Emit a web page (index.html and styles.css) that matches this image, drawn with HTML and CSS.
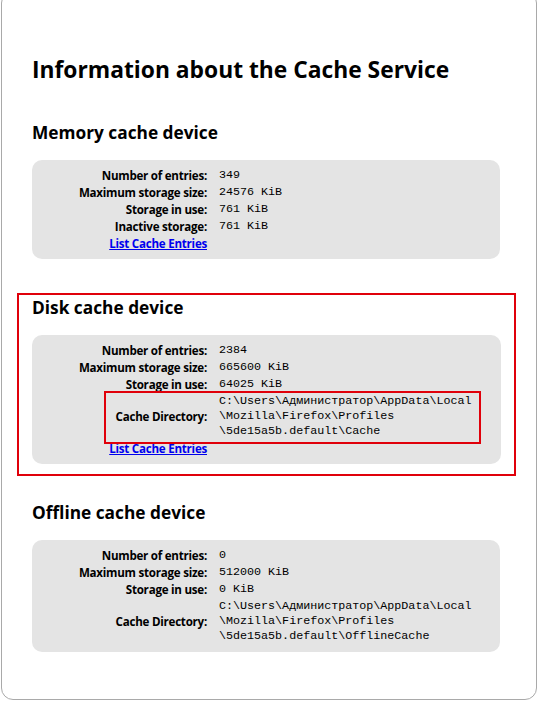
FILE: index.html
```html
<!DOCTYPE html>
<html>
<head>
<meta charset="utf-8">
<link rel="stylesheet" href="styles.css">
</head>
<body>
<div class="page">
  <h1 class="title">Information about the Cache Service</h1>

  <section class="device">
    <h2 class="dev-title">Memory cache device</h2>
    <div class="panel">
      <table class="info">
        <tr><th>Number of entries:</th><td>349</td></tr>
        <tr><th>Maximum storage size:</th><td>24576 KiB</td></tr>
        <tr><th>Storage in use:</th><td>761 KiB</td></tr>
        <tr><th>Inactive storage:</th><td>761 KiB</td></tr>
        <tr><th><a href="#">List Cache Entries</a></th><td></td></tr>
      </table>
    </div>
  </section>

  <section class="device highlight">
    <h2 class="dev-title">Disk cache device</h2>
    <div class="panel">
      <table class="info">
        <tr><th>Number of entries:</th><td>2384</td></tr>
        <tr><th>Maximum storage size:</th><td>665600 KiB</td></tr>
        <tr><th>Storage in use:</th><td>64025 KiB</td></tr>
        <tr><th>Cache Directory:</th><td>C:\Users\Администратор\AppData\Local<br>\Mozilla\Firefox\Profiles<br>\5de15a5b.default\Cache</td></tr>
        <tr><th><a href="#">List Cache Entries</a></th><td></td></tr>
      </table>
      <span class="mark"></span>
    </div>
  </section>

  <section class="device last">
    <h2 class="dev-title">Offline cache device</h2>
    <div class="panel">
      <table class="info">
        <tr><th>Number of entries:</th><td>0</td></tr>
        <tr><th>Maximum storage size:</th><td>512000 KiB</td></tr>
        <tr><th>Storage in use:</th><td>0 KiB</td></tr>
        <tr><th>Cache Directory:</th><td>C:\Users\Администратор\AppData\Local<br>\Mozilla\Firefox\Profiles<br>\5de15a5b.default\OfflineCache</td></tr>
      </table>
    </div>
  </section>
</div>
</body>
</html>
```

FILE: styles.css
```css
html, body {
  margin: 0;
  padding: 0;
  background: #ffffff;
  overflow: hidden;
}

body {
  font-family: "Open Sans", "Noto Sans", sans-serif;
  color: #000;
}

.page {
  box-sizing: border-box;
  margin: -9px 1px 0 1px;
  height: 709px;
  border: 1px solid #a9a9a9;
  border-radius: 12px;
  padding: 63px 36px 0 30px;
  display: flex;
  flex-direction: column;
}

.title {
  margin: 0;
  font-size: 22.8px;
  line-height: 30px;
  font-weight: 700;
}

.device {
  display: flex;
  flex-direction: column;
}

.dev-title {
  margin: 0;
  font-size: 17.3px;
  line-height: 24px;
  font-weight: 700;
}

.title + .device {
  margin-top: 36px;
}

.highlight {
  margin: 34px -16px 0 -15px;
  padding: 1px 13px 10px 13px;
  border: 2px solid #e0000a;
}

.last {
  margin-top: 25px;
}

.panel {
  position: relative;
  margin-top: 15px;
  background: #e4e4e4;
  border-radius: 10px;
  padding: 7px 0;
}

.info {
  border-collapse: collapse;
  border-spacing: 0;
}

.info th {
  width: 187px;
  box-sizing: border-box;
  padding: 1px 12px 1px 0;
  text-align: right;
  vertical-align: middle;
  font-size: 11.6px;
  letter-spacing: -0.25px;
  line-height: 15px;
  font-weight: 700;
  white-space: nowrap;
}

.info td {
  padding: 1px 0;
  font-family: "Liberation Mono", "Courier New", monospace;
  font-size: 11.7px;
  line-height: 15px;
  white-space: nowrap;
  vertical-align: middle;
}

.info a {
  color: #0000ee;
  text-decoration: underline;
}

.mark {
  position: absolute;
  left: 72px;
  top: 56px;
  width: 373px;
  height: 49px;
  border: 2px solid #e0000a;
}
```
